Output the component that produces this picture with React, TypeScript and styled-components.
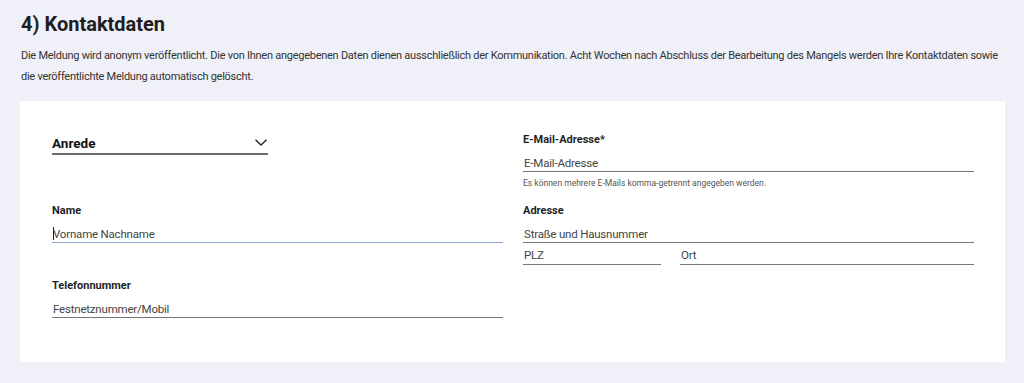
import React from "react";
import styled, { createGlobalStyle } from "styled-components";

const Global = createGlobalStyle`
  html, body { margin: 0; padding: 0; background: #f0f0f8; }
  body { font-family: Roboto, "Liberation Sans", Arial, sans-serif; color: #222; }
  * { box-sizing: border-box; }
`;

const Page = styled.div`
  padding: 12px 19px 22px 20px;
`;

const Title = styled.h2`
  margin: 0 0 0 1px;
  font-size: 20px;
  line-height: 24px;
  font-weight: 700;
  color: #1e1e1e;
`;

const Intro = styled.p`
  margin: 8.5px 0 0 1px;
  font-size: 11px;
  line-height: 21px;
  color: #333;
  letter-spacing: -0.26px;
`;

const Card = styled.div`
  margin-top: 14.5px;
  background: #fff;
  padding: 32px 31px 44px 32px;
  display: grid;
  grid-template-columns: 1fr 1fr;
  column-gap: 20px;
  row-gap: 14px;
  align-items: start;
`;

const Field = styled.div`
  display: flex;
  flex-direction: column;
  position: relative;
`;

const Label = styled.label`
  font-size: 11px;
  line-height: 14px;
  font-weight: 700;
  color: #1f1f1f;
  margin-bottom: 5px;
`;

const Input = styled.input<{ $focus?: boolean }>`
  appearance: none;
  border: 0;
  border-bottom: 1px solid ${(p) => (p.$focus ? "#8ea4cf" : "#777")};
  outline: none;
  background: transparent;
  font-family: inherit;
  font-size: 11.5px;
  letter-spacing: -0.2px;
  color: #333;
  height: 20px;
  padding: 2px 0 0 1px;
  width: 100%;
  &::placeholder { color: #444; opacity: 1; }
`;

const SubInput = styled(Input)`
  height: 22px;
  padding-top: 3px;
`;

const Caret = styled.span`
  position: absolute;
  left: 1px;
  bottom: 3px;
  width: 1px;
  height: 13px;
  background: #222;
`;

const Hint = styled.div`
  font-size: 8.5px;
  line-height: 12px;
  margin-top: 5px;
  margin-bottom: 1px;
  color: #555;
`;

const SubRow = styled.div`
  display: grid;
  grid-template-columns: 138px 1fr;
  column-gap: 19px;
`;

const Select = styled.div`
  width: 216px;
  height: 22px;
  border-bottom: 2px solid #6b6b6b;
  display: flex;
  align-items: center;
  justify-content: space-between;
  padding-bottom: 1px;
`;

const SelectText = styled.span`
  font-size: 13.5px;
  font-weight: 700;
  color: #111;
`;

const Chevron = () => (
  <svg width="14" height="9" viewBox="0 0 14 9" fill="none">
    <path d="M1.5 1.8 L7 7 L12.5 1.8" stroke="#222" strokeWidth="1.4" />
  </svg>
);

export default function App() {
  return (
    <>
      <Global />
      <Page>
        <Title>4) Kontaktdaten</Title>
        <Intro>
          Die Meldung wird anonym veröffentlicht. Die von Ihnen angegebenen Daten dienen ausschließlich der
          Kommunikation. Acht Wochen nach Abschluss der Bearbeitung des Mangels werden Ihre Kontaktdaten sowie
          die veröffentlichte Meldung automatisch gelöscht.
        </Intro>
        <Card>
          <Field>
            <Select>
              <SelectText>Anrede</SelectText>
              <Chevron />
            </Select>
          </Field>
          <Field>
            <Label>E-Mail-Adresse*</Label>
            <Input placeholder="E-Mail-Adresse" />
            <Hint>Es können mehrere E-Mails komma-getrennt angegeben werden.</Hint>
          </Field>
          <Field>
            <Label>Name</Label>
            <Input $focus placeholder="Vorname Nachname" />
            <Caret />
          </Field>
          <Field>
            <Label>Adresse</Label>
            <Input placeholder="Straße und Hausnummer" />
            <SubRow>
              <SubInput placeholder="PLZ" />
              <SubInput placeholder="Ort" />
            </SubRow>
          </Field>
          <Field>
            <Label>Telefonnummer</Label>
            <Input placeholder="Festnetznummer/Mobil" />
          </Field>
        </Card>
      </Page>
    </>
  );
}
